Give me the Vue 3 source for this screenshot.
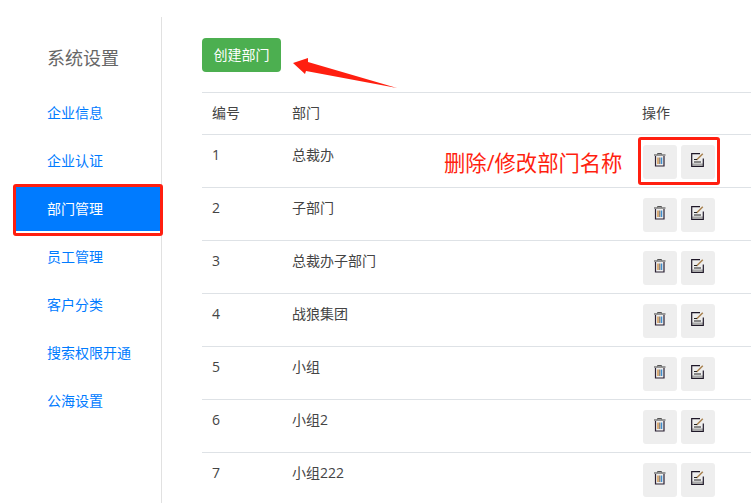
<script setup>
const menu = [
  { label: '企业信息' },
  { label: '企业认证' },
  { label: '部门管理', active: true },
  { label: '员工管理' },
  { label: '客户分类' },
  { label: '搜索权限开通' },
  { label: '公海设置' }
]
const rows = [
  { id: 1, name: '总裁办' },
  { id: 2, name: '子部门' },
  { id: 3, name: '总裁办子部门' },
  { id: 4, name: '战狼集团' },
  { id: 5, name: '小组' },
  { id: 6, name: '小组2' },
  { id: 7, name: '小组222' }
]
</script>

<template>
  <div class="page">
    <aside class="side">
      <h2 class="title">系统设置</h2>
      <ul class="menu">
        <li v-for="m in menu" :key="m.label" class="item" :class="{ active: m.active }">{{ m.label }}</li>
      </ul>
    </aside>
    <main class="main">
      <div class="bar">
        <button class="create"><span>创建部门</span></button>
      </div>
      <div class="table">
        <div class="row head">
          <div class="c1">编号</div>
          <div class="c2">部门</div>
          <div class="c3">操作</div>
        </div>
        <div v-for="r in rows" :key="r.id" class="row">
          <div class="c1">{{ r.id }}</div>
          <div class="c2">{{ r.name }}</div>
          <div class="ops">
            <button class="op">
              <svg width="14" height="14" viewBox="0 0 14 14" fill="none">
                <path d="M4.500 1.500V.5h4v1" stroke="#555" stroke-width="1"/>
                <path d="M1 2h11.500" stroke="#666" stroke-width="1.300"/>
                <path d="M2.500 3v10h8.500V3" stroke="#2a2033" stroke-width="1.200"/>
                <path d="M5 4.500V11" stroke="#d08a3a" stroke-width="1.300"/>
                <path d="M6.800 4.500V11" stroke="#777" stroke-width="1.300"/>
                <path d="M8.600 4.500V11" stroke="#3f8fd0" stroke-width="1.300"/>
              </svg>
            </button>
            <button class="op">
              <svg width="14" height="14" viewBox="0 0 14 14" fill="none">
                <path d="M1 10.500h11v3H1z" fill="#a9a9a9"/>
                <path d="M9 .7H.7v13h11.600V5.500" stroke="#1f1828" stroke-width="1.200"/>
                <path d="M5.500 7 11.800.8" stroke="#a8814f" stroke-width="1.500"/>
                <path d="M3 6.500h3M3 9h7" stroke="#222" stroke-width="1.100"/>
              </svg>
            </button>
          </div>
        </div>
      </div>
    </main>

    <svg class="arrow" width="120" height="45" viewBox="0 0 120 45">
      <polygon points="8,13 23,8 23,12 112,38 21,21 20,24" fill="#ff1f10"/>
    </svg>
    <div class="mark mark-ops"></div>
    <div class="mark mark-menu"></div>
    <div class="note">删除/修改部门名称</div>
  </div>
</template>

<style scoped>
.page {
  position: relative;
  display: flex;
  width: 751px;
  height: 503px;
  overflow: hidden;
  background: #fff;
  font-family: "Open Sans", "Noto Sans CJK SC", sans-serif;
}
.side {
  flex: none;
  width: 145px;
  margin: 17px 0 0 16px;
  border-right: 1px solid #e1e1e1;
}
.title {
  margin: 0;
  padding: 27px 0 0 31px;
  height: 47px;
  font-size: 18px;
  line-height: 28px;
  font-weight: 400;
  color: #666;
}
.menu {
  list-style: none;
  margin: 0;
  padding: 0;
}
.item {
  height: 44px;
  margin-bottom: 4px;
  padding-left: 31px;
  font-size: 14px;
  line-height: 44px;
  color: #007bff;
}
.item.active {
  background: #007bff;
  color: #fff;
}
.main {
  flex: 1;
  min-width: 0;
  padding: 38px 0 0 40px;
}
.bar {
  height: 54px;
}
.create {
  display: block;
  width: 79px;
  height: 34px;
  padding: 0 0 2px;
  border: 0;
  border-radius: 4px;
  background: #4caf50;
  color: #fff;
  font: inherit;
  font-size: 14px;
}
.table {
  border-top: 1px solid #dee2e6;
  font-size: 14px;
  color: #444;
}
.row {
  display: flex;
  height: 53px;
  border-bottom: 1px solid #dee2e6;
  box-sizing: border-box;
  line-height: 22px;
}
.row.head {
  height: 42px;
}
.c1,
.c2,
.c3 {
  margin-top: 9px;
  padding-left: 10px;
  box-sizing: border-box;
}
.c1 {
  width: 80px;
}
.c2 {
  width: 350px;
}
.ops {
  display: flex;
  gap: 4px;
  margin-top: 10px;
  padding-left: 11px;
}
.op {
  display: flex;
  align-items: center;
  justify-content: center;
  width: 34px;
  height: 34px;
  padding: 0 0 4px;
  border: 0;
  border-radius: 3px;
  background: #eee;
}
.arrow {
  position: absolute;
  left: 285px;
  top: 50px;
}
.mark {
  position: absolute;
  box-sizing: border-box;
  border: 3px solid #ff1f10;
  border-radius: 3px;
}
.mark-ops {
  left: 638px;
  top: 137px;
  width: 82px;
  height: 48px;
}
.mark-menu {
  left: 13px;
  top: 184px;
  width: 150px;
  height: 52px;
}
.note {
  position: absolute;
  left: 444px;
  top: 149px;
  font-size: 21.33px;
  line-height: 28px;
  color: #ff1f10;
}
</style>
